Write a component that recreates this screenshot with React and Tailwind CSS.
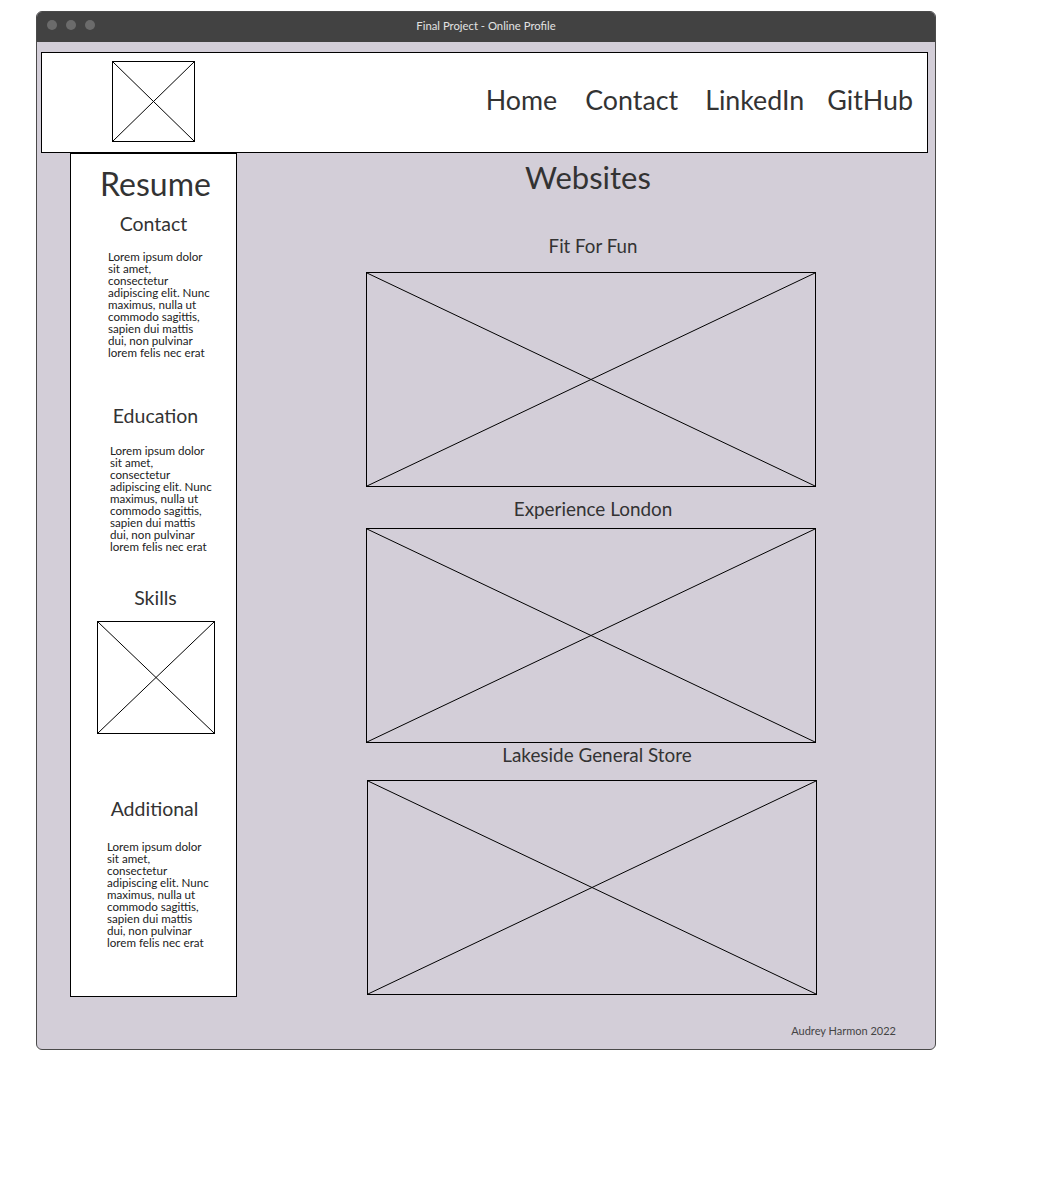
import React from "react";

const font = { fontFamily: "Lato, 'Liberation Sans', sans-serif" };

const Placeholder = ({ className }) => (
    <div className={`border border-black ${className}`}>
        <svg className="w-full h-full block" viewBox="0 0 100 100" preserveAspectRatio="none">
            <line x1="0" y1="0" x2="100" y2="100" stroke="#000" strokeWidth="1" vectorEffect="non-scaling-stroke" />
            <line x1="100" y1="0" x2="0" y2="100" stroke="#000" strokeWidth="1" vectorEffect="non-scaling-stroke" />
        </svg>
    </div>
);

const Lorem = ({ className }) => (
    <p className={`text-[11.6px] leading-[12px] text-[#222] w-[104px] ${className}`}>
        Lorem ipsum dolor sit amet, consectetur adipiscing elit. Nunc maximus, nulla ut commodo sagittis, sapien dui mattis dui, non pulvinar lorem felis nec erat
    </p>
);

const App = () => {
    return (
        <div className="bg-white min-h-[1199px] pt-[11px] pl-[36px]" style={font}>
            {/* window */}
            <div className="w-[900px] h-[1039px] flex flex-col rounded-[6px] overflow-hidden border border-[#4a4a4a] bg-[#d3ced8]">
                {/* title bar */}
                <div className="relative h-[31px] -mt-px -mx-px bg-[#424242] flex items-center justify-center shrink-0">
                    <div className="absolute left-[11px] top-[9px] flex gap-[9px]">
                        <span className="w-[10px] h-[10px] rounded-full bg-[#6b6b6b]" />
                        <span className="w-[10px] h-[10px] rounded-full bg-[#6b6b6b]" />
                        <span className="w-[10px] h-[10px] rounded-full bg-[#6b6b6b]" />
                    </div>
                    <span className="text-[11.3px] leading-[14px] text-[#e2e2e2] -mt-[2px]">Final Project - Online Profile</span>
                </div>

                <div className="px-[4px] pt-[10px] flex flex-col">
                    {/* header */}
                    <div className="w-[887px] h-[101px] bg-white border border-black flex items-center justify-between">
                        <Placeholder className="ml-[70px] w-[83px] h-[81px] -mt-[2px]" />
                        <nav className="flex pr-[14px] text-[26.8px] text-[#333] mb-[4px]">
                            <span>Home</span>
                            <span className="ml-[28px]">Contact</span>
                            <span className="ml-[27px]">LinkedIn</span>
                            <span className="ml-[23px]">GitHub</span>
                        </nav>
                    </div>

                    <div className="flex">
                        {/* sidebar */}
                        <aside className="ml-[29px] w-[167px] h-[844px] bg-white border border-black text-[#333] flex flex-col">
                            <h1 className="mt-[11px] text-[32px] leading-[38px] text-center pl-[4px]">Resume</h1>
                            <h2 className="mt-[9px] text-[19.5px] leading-[24px] text-center">Contact</h2>
                            <Lorem className="mt-[15px] ml-[37px]" />
                            <h2 className="mt-[45px] text-[19.5px] leading-[24px] text-center pl-[4px]">Education</h2>
                            <Lorem className="mt-[17px] ml-[39px]" />
                            <h2 className="mt-[33px] text-[19.5px] leading-[24px] text-center pl-[4px]">Skills</h2>
                            <Placeholder className="mt-[11px] ml-[26px] w-[118px] h-[113px]" />
                            <h2 className="mt-[63px] text-[19.5px] leading-[24px] text-center pl-[2px]">Additional</h2>
                            <Lorem className="mt-[20px] ml-[36px]" />
                        </aside>

                        {/* main */}
                        <main className="ml-[129px] w-[452px] flex flex-col items-center text-[#333]">
                            <h1 className="mt-[4px] text-[31px] leading-[40px] -ml-[8px]">Websites</h1>
                            <h2 className="mt-[37px] text-[18.7px] leading-[24px] ml-[2px]">Fit For Fun</h2>
                            <Placeholder className="mt-[14px] w-[450px] h-[215px] self-start" />
                            <h2 className="mt-[10px] text-[18.9px] leading-[24px] ml-[2px]">Experience London</h2>
                            <Placeholder className="mt-[7px] w-[450px] h-[215px] self-start" />
                            <h2 className="mt-[0px] text-[18.9px] leading-[24px] ml-[10px]">Lakeside General Store</h2>
                            <Placeholder className="mt-[13px] w-[450px] h-[215px] self-start ml-[1px]" />
                        </main>
                    </div>

                    {/* footer */}
                    <footer className="mt-[26px] pr-[35px] text-right text-[11px] text-[#444]">
                        Audrey Harmon 2022
                    </footer>
                </div>
            </div>
        </div>
    );
};

export default App;
